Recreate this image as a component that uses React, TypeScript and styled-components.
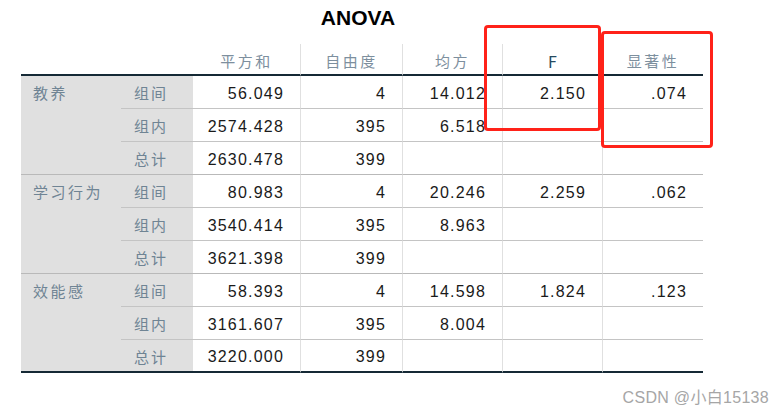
import styled, { createGlobalStyle } from 'styled-components'

const GlobalStyle = createGlobalStyle`
  body {
    margin: 0;
    background: #ffffff;
    font-family: "Liberation Sans", Arial, "Noto Sans CJK SC", sans-serif;
  }
`

type Sep = 'row' | 'group' | 'end'

const groups = [
  {
    name: '教养',
    rows: [
      { sub: '组间', ss: '56.049', df: '4', ms: '14.012', f: '2.150', sig: '.074' },
      { sub: '组内', ss: '2574.428', df: '395', ms: '6.518', f: '', sig: '' },
      { sub: '总计', ss: '2630.478', df: '399', ms: '', f: '', sig: '' },
    ],
  },
  {
    name: '学习行为',
    rows: [
      { sub: '组间', ss: '80.983', df: '4', ms: '20.246', f: '2.259', sig: '.062' },
      { sub: '组内', ss: '3540.414', df: '395', ms: '8.963', f: '', sig: '' },
      { sub: '总计', ss: '3621.398', df: '399', ms: '', f: '', sig: '' },
    ],
  },
  {
    name: '效能感',
    rows: [
      { sub: '组间', ss: '58.393', df: '4', ms: '14.598', f: '1.824', sig: '.123' },
      { sub: '组内', ss: '3161.607', df: '395', ms: '8.004', f: '', sig: '' },
      { sub: '总计', ss: '3220.000', df: '399', ms: '', f: '', sig: '' },
    ],
  },
]

const App = () => {
  return (
    <Page>
      <GlobalStyle />
      <Title>ANOVA</Title>
      <Grid>
        <HeadCell />
        <HeadCell />
        <HeadCell>平方和</HeadCell>
        <HeadCell $line>自由度</HeadCell>
        <HeadCell $line>均方</HeadCell>
        <HeadCell $line $latin>F</HeadCell>
        <HeadCell $line>显著性</HeadCell>
        {groups.map((g, gi) => {
          const last = gi === groups.length - 1
          return (
            <Group key={g.name}>
              <GroupLabel $sep={last ? 'end' : 'group'}>{g.name}</GroupLabel>
              {g.rows.map((r, ri) => {
                const sep: Sep = ri < 2 ? 'row' : last ? 'end' : 'group'
                return (
                  <Row key={r.sub}>
                    <SubLabel $sep={sep}>{r.sub}</SubLabel>
                    <Num $sep={sep}>{r.ss}</Num>
                    <Num $sep={sep} $line>{r.df}</Num>
                    <Num $sep={sep} $line>{r.ms}</Num>
                    <Num $sep={sep} $line>{r.f}</Num>
                    <Num $sep={sep} $line>{r.sig}</Num>
                  </Row>
                )
              })}
            </Group>
          )
        })}
      </Grid>
      <Mark $x={484} $y={25} $w={117} $h={106} />
      <Mark $x={601} $y={31} $w={112} $h={117} />
      <Watermark>CSDN @小白15138</Watermark>
    </Page>
  )
}

export default App

const sepColor = (s: Sep) => (s === 'end' ? '2px solid #152935' : s === 'group' ? '1px solid #b9b9b9' : '1px solid #c4c4c4')

const Page = styled.div`
  position: relative;
  width: 784px;
  height: 412px;
  overflow: hidden;
`

const Title = styled.div`
  width: 682px;
  margin-left: 17px;
  height: 44px;
  padding-top: 6px;
  box-sizing: border-box;
  text-align: center;
  font-family: "Liberation Sans", Arial, sans-serif;
  font-weight: bold;
  font-size: 21px;
  color: #000;
`

const Grid = styled.div`
  display: grid;
  grid-template-columns: 100px 72px 107px 102px 100px 100px 101px;
  grid-template-rows: 32px repeat(9, 33px);
  width: 682px;
  margin-left: 21px;
`

const Group = styled.div`
  display: contents;
`

const Row = styled.div`
  display: contents;
`

const HeadCell = styled.div<{ $line?: boolean; $latin?: boolean }>`
  box-sizing: border-box;
  display: flex;
  align-items: center;
  justify-content: center;
  padding-top: 3px;
  border-bottom: 2px solid #152935;
  border-left: ${(p) => (p.$line ? '1px solid #e0e0e0' : 'none')};
  font-family: "Noto Sans CJK SC", "Liberation Sans", sans-serif;
  font-size: ${(p) => (p.$latin ? '16px' : '15px')};
  letter-spacing: ${(p) => (p.$latin ? '0' : '2.5px')};
  color: ${(p) => (p.$latin ? '#264a60' : '#7d8f9e')};
`

const GroupLabel = styled.div<{ $sep: Sep }>`
  grid-column: 1;
  grid-row: span 3;
  box-sizing: border-box;
  background: #e0e0e0;
  border-bottom: ${(p) => sepColor(p.$sep)};
  padding: 6px 0 0 12px;
  font-family: "Noto Sans CJK SC", sans-serif;
  font-size: 15px;
  letter-spacing: 2.5px;
  color: #6f8494;
`

const SubLabel = styled.div<{ $sep: Sep }>`
  box-sizing: border-box;
  background: #e0e0e0;
  border-bottom: ${(p) => sepColor(p.$sep)};
  display: flex;
  align-items: center;
  padding: 1px 0 0 13px;
  font-family: "Noto Sans CJK SC", sans-serif;
  font-size: 15px;
  letter-spacing: 2px;
  color: #6f8494;
`

const Num = styled.div<{ $sep: Sep; $line?: boolean }>`
  box-sizing: border-box;
  border-bottom: ${(p) => sepColor(p.$sep)};
  border-left: ${(p) => (p.$line ? '1px solid #e0e0e0' : 'none')};
  display: flex;
  align-items: center;
  justify-content: flex-end;
  padding: 3px 16px 0 0;
  font-family: "Liberation Sans", Arial, sans-serif;
  font-size: 16px;
  letter-spacing: 1.2px;
  color: #1a1a1a;
`

const Mark = styled.div<{ $x: number; $y: number; $w: number; $h: number }>`
  position: absolute;
  left: ${(p) => p.$x}px;
  top: ${(p) => p.$y}px;
  width: ${(p) => p.$w}px;
  height: ${(p) => p.$h}px;
  box-sizing: border-box;
  border: 3px solid #ff2219;
  border-radius: 4px;
`

const Watermark = styled.div`
  position: absolute;
  right: 15px;
  top: 384px;
  font-family: "Liberation Sans", "Noto Sans CJK SC", sans-serif;
  font-size: 16px;
  letter-spacing: 0.3px;
  color: #a6a6a6;
`
